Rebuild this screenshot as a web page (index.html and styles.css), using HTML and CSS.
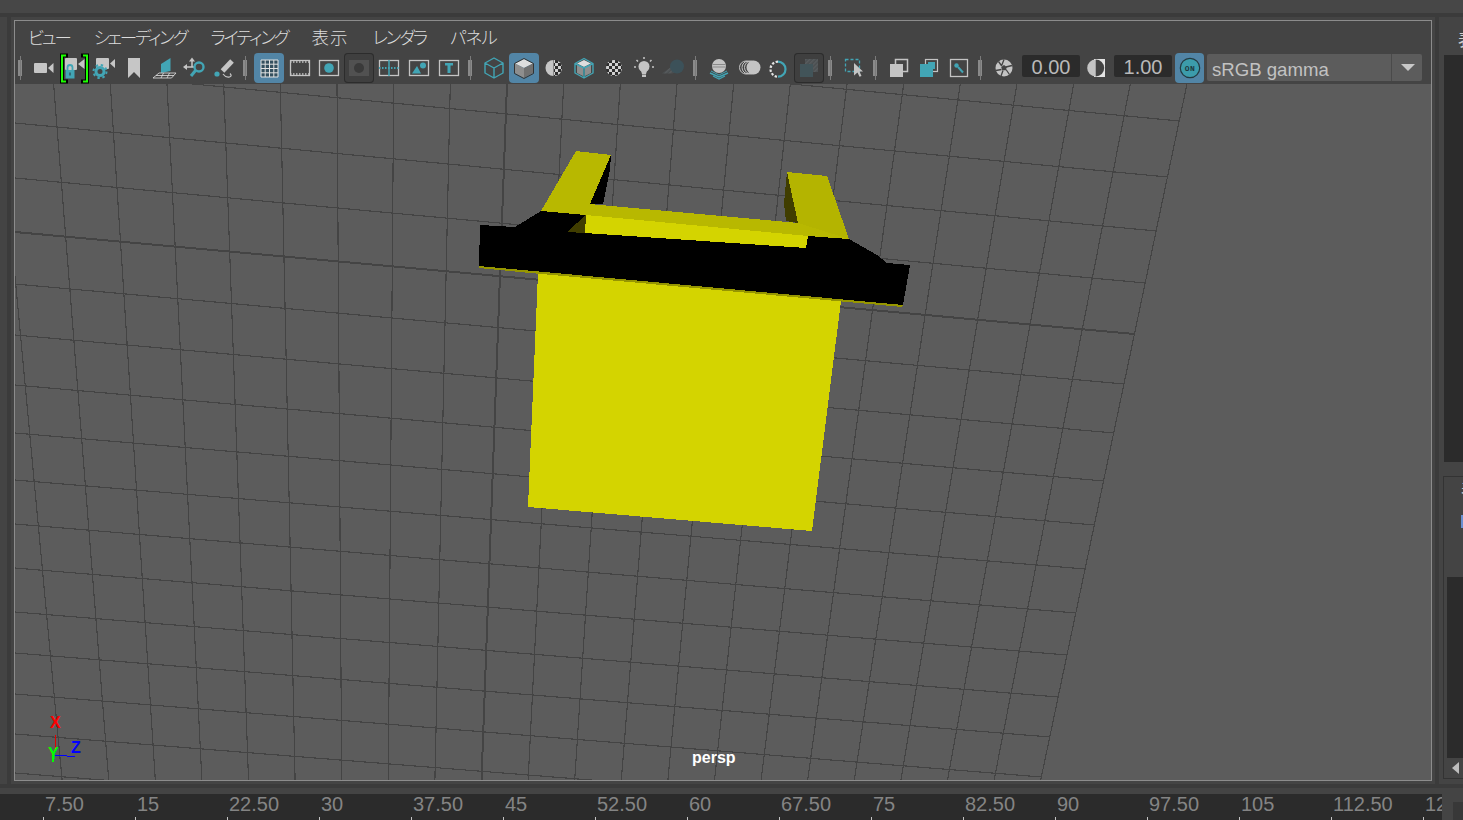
FILE: index.html
```html
<!DOCTYPE html>
<html lang="ja">
<head>
<meta charset="utf-8">
<title>Maya viewport</title>
<link rel="stylesheet" href="styles.css">
</head>
<body>
<svg class="defs" aria-hidden="true">
  <defs>
    <pattern id="chk" width="6" height="6" patternUnits="userSpaceOnUse" x="1" y="1">
      <rect width="6" height="6" fill="#2e2e2e"/>
      <rect width="3" height="3" fill="#d0d0d0"/>
      <rect x="3" y="3" width="3" height="3" fill="#d0d0d0"/>
    </pattern>
    <pattern id="hatch" width="3" height="3" patternUnits="userSpaceOnUse" patternTransform="rotate(45)">
      <rect width="3" height="3" fill="#4a4e50"/>
      <rect width="1.4" height="3" fill="#585c5e"/>
    </pattern>
  </defs>
</svg>
<div class="top-strip"></div>
<div class="main">
  <div class="view-pane">
    <div class="frame">
      <nav class="menu">
        <span class="kana">ビュー</span><span class="kana">シェーディング</span><span class="kana">ライティング</span><span class="kanji">表示</span><span class="kana">レンダラ</span><span class="kana-wide">パネル</span>
      </nav>
      <div class="toolbar">
        <i class="sep"></i>
        <button class="btn"><svg viewBox="0 0 30 30"><rect class="g" x="5" y="10" width="13" height="10" rx="1"/><polygon class="g" points="19,15 24.5,10 24.5,20"/></svg></button>
        <button class="btn"><svg viewBox="0 0 30 30"><rect class="g" x="6" y="5" width="12" height="12" rx="1"/><polygon class="g" points="19,11 25.5,6 25.5,16"/><path class="br-o" d="M7 2.5H3V28.5H7M24 2.5H28V28.5H24"/><path class="br" d="M7 2.5H3V28.5H7M24 2.5H28V28.5H24"/><path class="t-s" d="M8.5 18v-3.500a2.500 2.500 0 0 1 5 0v3.500" stroke-width="1.800"/><rect class="t" x="6.500" y="17" width="9" height="8.500"/><rect class="bgk" x="10.200" y="19.500" width="1.600" height="3"/></svg></button>
        <button class="btn"><svg viewBox="0 0 30 30"><rect class="g" x="7" y="5" width="13" height="11" rx="1"/><polygon class="g" points="21,10.5 26,6 26,15"/><circle class="t-s" cx="11" cy="18.5" r="4" stroke-width="3"/><circle class="t-d" cx="11" cy="18.5" r="6.500" stroke-width="2" stroke-dasharray="2.400 2.700"/></svg></button>
        <button class="btn"><svg viewBox="0 0 30 30"><polygon class="g" points="9,5 21,5 21,25 15,19 9,25"/></svg></button>
        <button class="btn"><svg viewBox="0 0 30 30"><polygon class="t" points="12,20 12,11 21.500,5 21.500,18"/><path class="w-t" d="M10 20H27L22.500 25H4ZM7 22.500H25M14.500 20 12 25M20.500 20 18 25"/></svg></button>
        <button class="btn"><svg viewBox="0 0 30 30"><path class="g-s" d="M6 14H13M13 14V7M13 14H16" stroke-width="1.5"/><polygon class="g" points="4,14 8,11 8,17"/><polygon class="g" points="13,4.5 10,8.5 16,8.5"/><circle class="t-s" cx="20" cy="14" r="4.5" stroke-width="2.4"/><path class="t-s" d="M16.5 17.5 12 23" stroke-width="3"/></svg></button>
        <button class="btn"><svg viewBox="0 0 30 30"><path class="g-s" d="M23 8 13.5 18" stroke-width="5"/><circle class="t" cx="8" cy="21" r="2.6"/><path class="g-s" d="M14 21q3 4 6.5 3q3-1 .5-3.500" stroke-width="1.2"/></svg></button>
        <i class="sep"></i>
        <button class="btn on"><svg viewBox="0 0 30 30"><rect class="cell-bg" x="7" y="7" width="17" height="17"/><path class="w-s" d="M7 7H24V24H7ZM11.200 7V24M15.500 7V24M19.800 7V24M7 11.200H24M7 15.500H24M7 19.800H24"/></svg></button>
        <button class="btn"><svg viewBox="0 0 30 30"><rect class="l-s" x="6.500" y="7.500" width="19" height="15"/><path class="l-s" d="M6 9H26M6 21H26" stroke-width="2" stroke-dasharray="1.500 1.500"/></svg></button>
        <button class="btn"><svg viewBox="0 0 30 30"><rect class="l-s" x="5.500" y="7.500" width="19" height="15"/><circle class="t" cx="15" cy="15" r="4.800"/></svg></button>
        <button class="btn boxed"><svg viewBox="0 0 30 30"><rect class="box-in" x="5" y="7" width="20" height="16"/><circle class="box-dot" cx="15" cy="15" r="5"/></svg></button>
        <button class="btn"><svg viewBox="0 0 30 30"><rect class="l-s" x="5.500" y="7.500" width="19" height="15"/><path class="t-s" d="M5 15H25" stroke-width="2" stroke-dasharray="1.500 1.500"/><path class="t-s" d="M15 7V23" stroke-width="1.500"/></svg></button>
        <button class="btn"><svg viewBox="0 0 30 30"><rect class="l-s" x="5.500" y="7.500" width="19" height="15"/><polygon class="t" points="8,20.500 13,13 17,20.500"/><circle class="t" cx="19" cy="12.500" r="3"/></svg></button>
        <button class="btn"><svg viewBox="0 0 30 30"><rect class="l-s" x="5.500" y="7.500" width="19" height="15"/><path class="t" d="M11 10H19V12.500H16.500V20H13.500V12.500H11Z"/></svg></button>
        <i class="sep"></i>
        <button class="btn"><svg viewBox="0 0 30 30"><path class="t-l" d="M15 5 24 10V20L15 25 6 20V10ZM6 10 15 15 24 10M15 15V25"/></svg></button>
        <button class="btn on"><svg viewBox="0 0 30 30"><polygon class="cube-top" points="15,6 24,10.500 15,15 6,10.500"/><polygon class="cube-l" points="6,10.500 15,15 15,25 6,20"/><polygon class="cube-r" points="24,10.500 15,15 15,25 24,20"/><path class="dk-l" d="M15 5.500 24.500 10.500V20.500L15 25.500 5.500 20.500V10.500Z"/></svg></button>
        <button class="btn"><svg viewBox="0 0 30 30"><path class="g" d="M14.500 7a8 8 0 0 0 0 16Z"/><path fill="url(#chk)" d="M15 7a8 8 0 0 1 0 16Z"/></svg></button>
        <button class="btn"><svg viewBox="0 0 30 30"><polygon class="cube-top" points="15,7 22,10.500 15,14 8,10.500"/><polygon class="cube-l" points="8,11.500 14,14.500 14,23 8,20"/><polygon class="cube-l" points="22,11.500 16,14.500 16,23 22,20"/><path class="t-l" d="M15 5.500 24 10.500V20L15 25 6 20V10.500ZM6 10.500 15 15 24 10.500M15 15V25" stroke-width="1.300"/></svg></button>
        <button class="btn"><svg viewBox="0 0 30 30"><circle fill="url(#chk)" cx="15" cy="15" r="8"/></svg></button>
        <button class="btn"><svg viewBox="0 0 30 30"><circle class="lt" cx="15" cy="13.500" r="5.500"/><polygon class="lt" points="11.500,16 18.500,16 17,21 13,21"/><rect class="lt" x="13" y="21.500" width="4" height="2.500"/><path class="g-s" d="M15 4V6M7.500 7 9 8.500M22.500 7 21 8.500M5 14H7M23 14H25" stroke-width="1.500"/></svg></button>
        <button class="btn"><svg viewBox="0 0 30 30"><polygon fill="url(#hatch)" points="3,20.500 12,14 20,17 13,20.500"/><circle class="dim" cx="18" cy="13.500" r="7"/></svg></button>
        <i class="sep"></i>
        <button class="btn"><svg viewBox="0 0 30 30"><circle class="lt" cx="15" cy="13" r="7"/><path class="g-d" d="M9 11.500H21M8.500 14H21.500" stroke-width="1"/><path class="t-s" d="M6 20 15 24 24 20" stroke-width="1.400"/><path class="t-s" d="M7 18 15 22 23 18" stroke-width="1"/><path class="t-s" d="M9 23 15 26 21 23" stroke-width="1.200"/></svg></button>
        <button class="btn"><svg viewBox="0 0 30 30"><circle class="lt-o" cx="12" cy="14.500" r="6.500"/><circle class="lt-o" cx="14.500" cy="14.500" r="6.500"/><circle class="lt-o" cx="17" cy="14.500" r="6.500"/><circle class="lt" cx="19.500" cy="14.500" r="7"/></svg></button>
        <button class="btn"><svg viewBox="0 0 30 30"><path class="t-s" d="M14 8.700a7.500 7.500 0 0 1 0 15" stroke-width="2.200"/><path class="w-s" d="M14 8.700a7.500 7.500 0 0 0 0 15" stroke-width="2.200" stroke-dasharray="2.400 1.600"/></svg></button>
        <button class="btn boxed"><svg viewBox="0 0 30 30"><rect fill="url(#hatch)" x="11" y="6" width="13" height="13"/><rect class="dim2" x="6" y="11" width="13" height="13"/></svg></button>
        <i class="sep"></i>
        <button class="btn"><svg viewBox="0 0 30 30"><rect class="t-d" x="6.500" y="6.500" width="14" height="12" stroke-width="1.300" stroke-dasharray="3 2"/><polygon class="lt" points="15,10 24,18.500 20.500,18.500 22.500,23 20.500,23.800 18.500,19.500 15,22.500"/></svg></button>
        <i class="sep"></i>
        <button class="btn"><svg viewBox="0 0 30 30"><rect class="lt-o" x="11.500" y="6.500" width="12" height="12" stroke-width="1.500"/><rect class="lt" x="6" y="11" width="13" height="13"/></svg></button>
        <button class="btn"><svg viewBox="0 0 30 30"><rect class="lt-o" x="11.500" y="6.500" width="12" height="12" stroke-width="1.200"/><rect class="t" x="6" y="11" width="13" height="13"/><rect class="t" x="14" y="9" width="7" height="7"/></svg></button>
        <button class="btn"><svg viewBox="0 0 30 30"><rect class="l-s" x="6.500" y="6.500" width="17" height="17"/><path class="t-s" d="M19 19.500 14 14" stroke-width="2"/><circle class="t" cx="12.500" cy="12.500" r="2.200"/></svg></button>
        <i class="sep"></i>
        <button class="btn"><svg viewBox="0 0 30 30"><circle class="lt" cx="15" cy="15" r="8.500"/><path class="dk-b" d="M15 6.500 12.700 12.500M23 12.500 17 14M20.500 21.500 17 16.500M12 23 14 17.500M6.800 17.500 12.500 16.500M9.500 8.500 12.800 13"/><polygon class="bar-bg" points="15,12 17.800,14 16.800,17.300 13.200,17.300 12.200,14"/></svg></button>
        <output class="num">0.00</output>
        <button class="btn"><svg viewBox="0 0 30 30"><rect class="wh" x="13" y="6" width="11" height="18"/><path class="lt" d="M14.700 6.500a8.500 8.500 0 0 0 0 17Z"/><path class="half" d="M14.700 6.500a8.500 8.500 0 0 1 0 17Z"/></svg></button>
        <output class="num">1.00</output>
        <button class="btn on on-btn"><svg viewBox="0 0 30 30"><circle class="on-c" cx="15" cy="15" r="9.700"/><text class="on-t" x="15" y="18">ON</text></svg></button>
        <div class="select"><span class="select-label">sRGB gamma</span><span class="select-arrow"></span></div>
      </div>
      <svg class="scene" viewBox="15 84 1416 696" preserveAspectRatio="none">
        <path class="grid" d="M-3 84 62.100 780M53.600 84 108.700 780M110.300 84 155.300 780M167 84 201.900 780M223.700 84 248.500 780M280.300 84 295.100 780M337 84 341.700 780M393.700 84 388.300 780M450.300 84 434.900 780M563.700 84 528.100 780M620.300 84 574.700 780M677 84 621.300 780M733.700 84 667.900 780M790.300 84 714.500 780M847 84 761.100 780M903.700 84 807.700 780M960.300 84 854.300 780M1017 84 900.900 780M1073.700 84 947.500 780M1130.300 84 994.100 780M1187 84 1040.700 780"/>
        <path class="grid" d="M15 10 1179.200 121M15 67 1167.500 177M15 123 1156.200 231M15 178 1145.200 283M15 284 1124 384M15 335 1113.800 433M15 385 1103.700 481M15 433 1094.500 525M15 480 1085.200 569M15 524 1076 613M15 568 1067.200 655M15 612 1058.400 697M15 653 1050 737M15 694 1041.600 777M15 734 1041 816M15 773 1041 855"/>
        <path class="grid-axis" d="M507 84 481.500 780M15 232 1134.500 334"/>

        <polygon class="y-front" points="538,273 841,301 812,531 528,507"/>
        <polygon class="y-dim" points="479,265 903,305 902,307 520,272 479,268"/>
        <polygon class="y-mid" points="576,151 611,155 590,204 541,211"/>
        <polygon class="blk" points="611,155 610,170 603,204 590,204"/>
        <polygon class="y-shade" points="787,172 784,203 786,221 798,223"/>
        <polygon class="y-mid2" points="787,172 827,176 849,239 798,223"/>
        <polygon class="blk" points="480,225 515,227 541,211 586,215 585,233 806,248 808,236 849,239 877,255 887,263 910,265 903,305 479,266"/>
        <polygon class="y-shade" points="586,215 585,233 567,232"/>
        <polygon class="y-mid" points="541,211 590,204 798,223 849,239 808,236 586,215"/>
        <polygon class="y-front" points="586,215 808,236 806,248 585,233"/>

        <path class="ax-r" d="M55 735V752"/>
        <path class="ax-b" d="M55 755H67M67 756H75"/>
        <path class="ax-g" d="M53 755V762"/>
        <text class="lbl-x" x="50" y="728">X</text>
        <text class="lbl-z" x="71" y="753">Z</text>
        <text class="lbl-y" x="48" y="759">Y</text>
        <text class="lbl-cam" x="692" y="763">persp</text>
      </svg>
    </div>
  </div>
  <aside class="side">
    <div class="side-head">表</div>
    <div class="side-dark"></div>
    <div class="side-panel">
      <div class="side-tab">表</div>
      <div class="side-mark"></div>
      <div class="side-list"></div>
      <div class="side-scroll"><span class="tri-left"></span></div>
    </div>
  </aside>
</div>
<div class="hsep"></div>
<div class="bottom">
  <div class="timeline">
    <span>7.50</span><span>15</span><span>22.50</span><span>30</span><span>37.50</span><span>45</span><span>52.50</span><span>60</span><span>67.50</span><span>75</span><span>82.50</span><span>90</span><span>97.50</span><span>105</span><span>112.50</span><span>120</span>
  </div>
  <div class="corner"></div>
</div>
</body>
</html>
```
FILE: styles.css
```css
* { box-sizing: border-box; }
html, body { margin: 0; height: 820px; overflow: hidden; }
body { width: 1463px; background: #444; font-family: "Liberation Sans", Arial, sans-serif; color: #c8c8c8; }
.defs { position: absolute; width: 0; height: 0; }

.top-strip { height: 17px; background: #474747; border-bottom: 4px solid #3b3b3b; }
.main { display: flex; height: 767px; padding-left: 7px; }
.view-pane { width: 1432px; border-left: 4px solid #3b3b3b; border-right: 4px solid #3b3b3b; padding: 3px; }
.frame { height: 761px; border: 1px solid #8c8c8c; display: flex; flex-direction: column; background: #444; }

.menu { height: 32px; display: flex; align-items: center; gap: 24px; padding: 0 0 2px 13px; font-family: "Noto Sans CJK JP", sans-serif; font-size: 17.500px; font-weight: 300; font-feature-settings: "palt"; color: #dcdcdc; }
.kana { letter-spacing: -2.150px; }
.kana-wide { letter-spacing: -1px; }
.kanji { letter-spacing: 1px; }
.toolbar { height: 31px; display: flex; margin-left: -1px; }
.sep { width: 15px; height: 24px; margin-top: 3px; flex: none; background:
  linear-gradient(#7a7a7a, #7a7a7a) 6px 0 / 1px 100% no-repeat,
  linear-gradient(#8a8a8a, #8a8a8a) 4px 4px / 4px 16px no-repeat; }
.btn { width: 30px; height: 30px; padding: 0; border: 0; background: none; flex: none; border-radius: 4px; display: block; }
.btn svg { display: block; width: 30px; height: 30px; overflow: visible; }
.btn.on { background: #5285a6; }
.btn.boxed { background: #3f3f3f; box-shadow: inset 0 0 0 1px #2c2c2c; }
.on-btn { margin: 0 3px 0 2px; width: 29px; }

.num { width: 58px; height: 22px; margin: 2px 1px 0 3px; background: #2b2b2b; border-radius: 2px; color: #b9b9b9; font-size: 20px; line-height: 25px; text-align: center; flex: none; }
.select { width: 215px; height: 27px; margin-top: 1px; background: #5c5c5c; border-radius: 2px; display: flex; flex: none; }
.select-label { flex: 1; padding-left: 5px; font-size: 18.600px; line-height: 32px; color: #c2c2c2; border-right: 1px solid #4a4a4a; }
.select-arrow { width: 30px; flex: none; position: relative; }
.select-arrow::after { content: ""; position: absolute; left: 9px; top: 10px; border: 7px solid transparent; border-top: 7px solid #c8c8c8; border-bottom: 0; }

.g { fill: #c6c6c6; }
.t { fill: #42a5b5; }
.lt { fill: #c4c4c4; }
.wh { fill: #e4e4e4; }
.half { fill: #444; }
.dim { fill: #3c5159; }
.dim2 { fill: #425459; }
.bgk { fill: #2d5c66; }
.cell-bg { fill: #35505f; }
.box-in { fill: #515151; }
.box-dot { fill: #3a3a3a; }
.bar-bg { fill: #444; }
.t-s, .t-d, .t-l, .g-s, .g-d, .w-s, .w-t, .l-s, .lt-o, .dk-l, .dk-b { fill: none; }
.t-s, .t-d { stroke: #42a5b5; }
.t-l { stroke: #42a5b5; stroke-width: 1.400px; stroke-linejoin: round; }
.g-s { stroke: #c6c6c6; }
.g-d { stroke: #8a8a8a; }
.w-s { stroke: #e2e2e2; }
.w-t { stroke: #e2e2e2; stroke-width: .8px; }
.l-s { stroke: #c4c4c4; stroke-width: 1.300px; }
.lt-o { stroke: #c4c4c4; }
.dk-l { stroke: #333; stroke-width: 1px; stroke-linejoin: round; }
.dk-b { stroke: #444; stroke-width: 1.300px; }
.br-o { fill: none; stroke: #000; stroke-width: 4px; stroke-linecap: square; }
.br { fill: none; stroke: #1cff00; stroke-width: 2px; }
.cube-top { fill: #dedede; }
.cube-l { fill: #8e8e8e; }
.cube-r { fill: #707070; }
.on-c { fill: #3c9cab; stroke: #243a40; stroke-width: 1.200px; }
.on-t { font-size: 8px; font-weight: 700; fill: #1f3a40; text-anchor: middle; letter-spacing: .5px; font-family: "Liberation Mono", monospace; }

.scene { display: block; flex: none; width: 1416px; height: 696px; background: #5c5c5c; }
.grid { fill: none; stroke: #444; stroke-width: 1.150px; shape-rendering: crispEdges; }
.grid-axis { fill: none; stroke: #444; stroke-width: 2px; shape-rendering: crispEdges; }
.y-front { fill: #d4d400; shape-rendering: crispEdges; }
.y-mid { fill: #b8b800; shape-rendering: crispEdges; }
.y-mid2 { fill: #b4b400; shape-rendering: crispEdges; }
.y-dim { fill: #969600; shape-rendering: crispEdges; }
.y-shade { fill: #403d00; shape-rendering: crispEdges; }
.blk { fill: #000; shape-rendering: crispEdges; }
.ax-r { stroke: #e00000; fill: none; shape-rendering: crispEdges; }
.ax-b { stroke: #0000ff; fill: none; shape-rendering: crispEdges; }
.ax-g { stroke: #00ff00; fill: none; stroke-width: 2px; shape-rendering: crispEdges; }
.lbl-x, .lbl-y, .lbl-z { font-size: 16px; font-weight: 700; }
.lbl-x { fill: #ff0000; }
.lbl-z { fill: #0000ff; }
.lbl-y { fill: #00ff00; }
.lbl-cam { fill: #fff; font-size: 16px; font-weight: 700; }

.side { width: 24px; flex: none; display: flex; flex-direction: column; padding-left: 5px; overflow: hidden; }
.side-head { height: 38px; padding: 12px 0 0 14px; font-family: "Noto Sans CJK JP", sans-serif; font-size: 17px; line-height: 20px; white-space: nowrap; color: #d0d0d0; }
.side-dark { height: 407px; background: #2b2b2b; width: 30px; flex: none; }
.side-panel { margin: 14px 0 0 -1px; width: 40px; height: 303px; border: 1px solid #333; padding: 0 0 0 3px; }
.side-tab { height: 26px; padding: 2px 0 0 14px; font-family: "Noto Sans CJK JP", sans-serif; font-size: 17px; line-height: 20px; color: #d0d0d0; }
.side-mark { width: 3px; height: 13px; margin: 12px 0 0 14px; background: #6a8fd0; }
.side-list { height: 181px; margin-top: 49px; background: #2b2b2b; }
.side-scroll { height: 19px; display: flex; align-items: center; padding-left: 5px; }
.tri-left { border: 6px solid transparent; border-right: 7px solid #bdbdbd; border-left: 0; }

.hsep { height: 4px; background: #3b3b3b; }
.bottom { height: 32px; padding-top: 6px; display: flex; }
.timeline { width: 1442px; height: 26px; background: #2b2b2b; display: grid; grid-auto-flow: column; grid-auto-columns: 92px; padding-left: 43px; overflow: hidden; flex: none; }
.timeline span { font-size: 20px; line-height: 21px; color: #848484; padding-left: 2px; white-space: nowrap; background: linear-gradient(#c4c4c4, #c4c4c4) left bottom / 1px 3px no-repeat; }
.corner { width: 10px; height: 18px; margin: 8px 0 0 11px; background: #383838; flex: none; }
```
